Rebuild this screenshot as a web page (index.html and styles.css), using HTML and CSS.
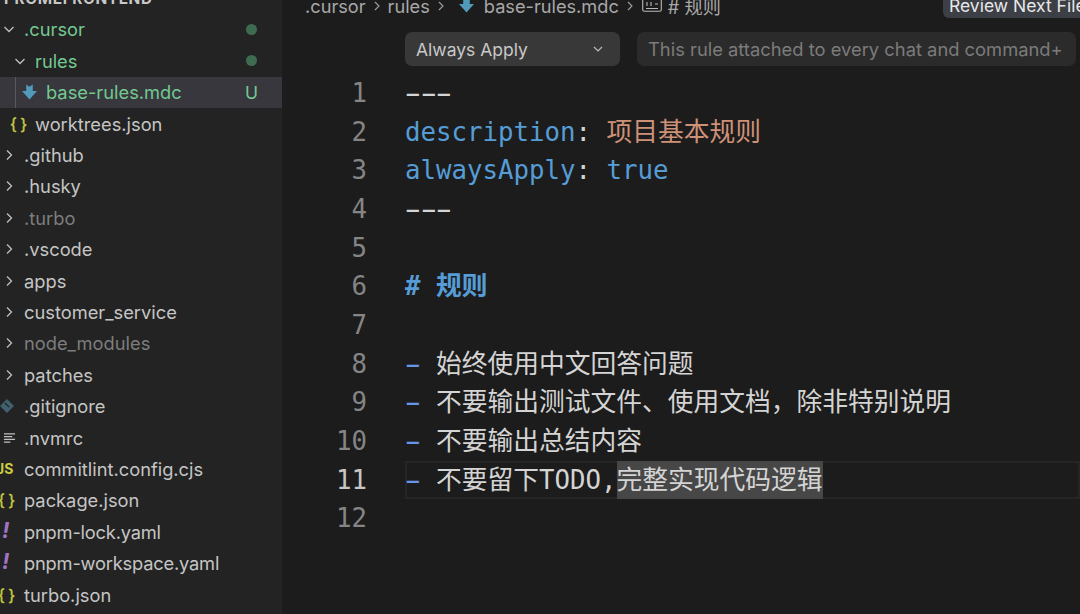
FILE: index.html
```html
<!DOCTYPE html>
<html lang="zh">
<head>
<meta charset="utf-8">
<title>base-rules.mdc</title>
<link rel="stylesheet" href="styles.css">
</head>
<body>
<div class="app">
  <aside class="sidebar">
    <div class="head"><span>PROMEFRONTEND</span></div>
    <div class="row mod d1"><svg class="chev" viewBox="0 0 12 12"><path d="M1.500 4 6 8.500 10.500 4"/></svg><span class="name">.cursor</span><i class="dot"></i></div>
    <div class="row mod d2"><svg class="chev" viewBox="0 0 12 12"><path d="M1.500 4 6 8.500 10.500 4"/></svg><span class="name">rules</span><i class="dot"></i></div>
    <div class="row mod d3 sel"><b class="guide"></b><svg class="ficon" viewBox="0 0 16 16"><path class="blue" d="M4.500 0 8 2.500 11.500 0v7H16L8 16 0 7h4.500z"/></svg><span class="name">base-rules.mdc</span><span class="badge">U</span></div>
    <div class="row d2f"><span class="ic yellow">{ }</span><span class="name">worktrees.json</span></div>
    <div class="row"><svg class="chev" viewBox="0 0 12 12"><path d="M4 1.500 8.500 6 4 10.500"/></svg><span class="name">.github</span></div>
    <div class="row"><svg class="chev" viewBox="0 0 12 12"><path d="M4 1.500 8.500 6 4 10.500"/></svg><span class="name">.husky</span></div>
    <div class="row dim"><svg class="chev" viewBox="0 0 12 12"><path d="M4 1.500 8.500 6 4 10.500"/></svg><span class="name">.turbo</span></div>
    <div class="row"><svg class="chev" viewBox="0 0 12 12"><path d="M4 1.500 8.500 6 4 10.500"/></svg><span class="name">.vscode</span></div>
    <div class="row"><svg class="chev" viewBox="0 0 12 12"><path d="M4 1.500 8.500 6 4 10.500"/></svg><span class="name">apps</span></div>
    <div class="row"><svg class="chev" viewBox="0 0 12 12"><path d="M4 1.500 8.500 6 4 10.500"/></svg><span class="name">customer_service</span></div>
    <div class="row dim"><svg class="chev" viewBox="0 0 12 12"><path d="M4 1.500 8.500 6 4 10.500"/></svg><span class="name">node_modules</span></div>
    <div class="row"><svg class="chev" viewBox="0 0 12 12"><path d="M4 1.500 8.500 6 4 10.500"/></svg><span class="name">patches</span></div>
    <div class="row"><svg class="fi" viewBox="0 0 14 14"><path d="M7 0 14 7 7 14 0 7z" fill="#41606f"/><path d="M5 4 9 8" stroke="#222" stroke-width="1.200"/></svg><span class="name">.gitignore</span></div>
    <div class="row"><svg class="fi nv" viewBox="0 0 14 14"><path d="M1 2.500h12M1 5.500h9M1 8.500h12M1 11.500h7" stroke="#c0c0c0" stroke-width="1.300"/></svg><span class="name">.nvmrc</span></div>
    <div class="row"><span class="ic2 yellow js"><span>JS</span></span><span class="name">commitlint.config.cjs</span></div>
    <div class="row"><span class="ic2 yellow">{ }</span><span class="name">package.json</span></div>
    <div class="row"><span class="ic2 purple">!</span><span class="name narrow">pnpm-lock.yaml</span></div>
    <div class="row"><span class="ic2 purple">!</span><span class="name narrow">pnpm-workspace.yaml</span></div>
    <div class="row"><span class="ic2 yellow">{ }</span><span class="name">turbo.json</span></div>
  </aside>
  <main class="editor">
    <div class="crumbs">
      <span class="c">.cursor</span><svg class="sep" viewBox="0 0 10 10"><path d="M3 1 7 5 3 9"/></svg>
      <span class="c">rules</span><svg class="sep" viewBox="0 0 10 10"><path d="M3 1 7 5 3 9"/></svg>
      <svg class="cicon" viewBox="0 0 16 16"><path class="blue" d="M4.500 0 8 2.500 11.500 0v7H16L8 16 0 7h4.500z"/></svg>
      <span class="c">base-rules.mdc</span><svg class="sep" viewBox="0 0 10 10"><path d="M3 1 7 5 3 9"/></svg>
      <svg class="sym" viewBox="0 0 20 16"><rect x=".7" y="1.700" width="18.600" height="12.600" rx="1.500"/><path d="M4 11.500h12M5 5v4M9 5v4M13 7h3"/></svg>
      <span class="c"># 规则</span>
      <div class="review"><span>Review Next File</span></div>
    </div>
    <div class="toolbar">
      <div class="select"><span>Always Apply</span><svg viewBox="0 0 12 12"><path d="M2 4 6 8 10 4"/></svg></div>
      <div class="desc">This rule attached to every chat and command+</div>
    </div>
    <div class="code">
      <div class="ln"><span class="no">1</span><span class="t"><span class="w">-</span><span class="w">-</span><span class="w">-</span></span></div>
      <div class="ln"><span class="no">2</span><span class="t"><span class="k">description</span>: <span class="s">项目基本规则</span></span></div>
      <div class="ln"><span class="no">3</span><span class="t"><span class="k">alwaysApply</span>: <span class="b">true</span></span></div>
      <div class="ln"><span class="no">4</span><span class="t"><span class="w">-</span><span class="w">-</span><span class="w">-</span></span></div>
      <div class="ln"><span class="no">5</span><span class="t"></span></div>
      <div class="ln"><span class="no">6</span><span class="t h"># 规则</span></div>
      <div class="ln"><span class="no">7</span><span class="t"></span></div>
      <div class="ln"><span class="no">8</span><span class="t"><span class="w m">-</span> 始终使用中文回答问题</span></div>
      <div class="ln"><span class="no">9</span><span class="t"><span class="w m">-</span> 不要输出测试文件、使用文档，除非特别说明</span></div>
      <div class="ln"><span class="no">10</span><span class="t"><span class="w m">-</span> 不要输出总结内容</span></div>
      <div class="ln cur"><span class="no">11</span><span class="t"><span class="w m">-</span> 不要留下TODO,<span class="hl">完整实现代码逻辑</span></span></div>
      <div class="ln"><span class="no">12</span><span class="t"></span></div>
    </div>
  </main>
</div>
</body>
</html>
```
FILE: styles.css
```css
* { box-sizing: border-box; }
html, body { margin: 0; height: 100%; overflow: hidden; background: #1c1c1c; }
.app { display: flex; width: 1080px; height: 614px; overflow: hidden; font-family: Inter, "Noto Sans CJK SC", sans-serif; }
.sidebar { width: 282px; flex: none; background: #232323; color: #c5c5c5; font-size: 18.300px; }
.head { height: 13.800px; overflow: hidden; font-size: 15.400px; font-weight: 700; letter-spacing: .6px; padding-left: 4px; color: #c8c8c8; line-height: 14px; }
.head span { position: relative; top: -8px; }
.row { height: 31.400px; display: flex; align-items: center; padding-left: 3px; white-space: nowrap; }
.name { margin-left: 9px; }
.narrow { letter-spacing: -.2px; }
.chev { width: 12px; height: 12px; flex: none; }
.chev path { fill: none; stroke: #c0c0c0; stroke-width: 1.300; }
.d2 { padding-left: 14px; }
.mod { color: #73c991; }
.dim { color: #7d7d7d; }
.dot { width: 11px; height: 11px; border-radius: 50%; background: #3f6b50; margin-left: auto; margin-right: 25px; }
.sel { background: #37373d; padding-left: 15px; position: relative; }
.guide { position: absolute; left: 15px; top: 0; bottom: 0; width: 1px; background: #5a5a5a; }
.ficon { width: 15px; height: 16px; margin-left: 7px; flex: none; }
.blue { fill: #519aba; }
.badge { margin-left: auto; margin-right: 24px; font-size: 17.500px; }
.d2f { padding-left: 10px; }
.ic { width: 17px; font-size: 16px; word-spacing: -1px; flex: none; -webkit-text-stroke: .4px #cbcb41; }
.d2f .name { margin-left: 8px; }
.yellow { color: #cbcb41; }
.ic2 { width: 24px; margin-left: -3px; flex: none; font-size: 16px; word-spacing: -1px; text-indent: -2px; -webkit-text-stroke: .4px #cbcb41; overflow: hidden; white-space: nowrap; }
.ic2 + .name { margin-left: 0; }
.ic2.purple { color: #a074c4; font-style: italic; font-weight: 700; font-size: 22px; padding-left: 2px; text-indent: 0; -webkit-text-stroke: 0; position: relative; top: -2px; }
.ic2.js { font-size: 14px; font-weight: 700; -webkit-text-stroke: 0; text-indent: -4px; }
.fi { width: 14px; height: 14px; flex: none; margin-left: -3px; margin-right: 10px; }
.fi.nv { width: 13px; height: 14px; margin-left: 0; margin-right: 8px; }
.fi + .name { margin-left: 0; }
.editor { flex: 1; min-width: 0; display: flex; flex-direction: column; }
.crumbs { display: flex; align-items: center; padding-left: 23px; color: #a8a8a8; font-size: 18.200px; white-space: nowrap; position: relative; margin-top: -6px; height: 24px; overflow: hidden; }
.sep { width: 10px; height: 10px; margin: 0 6px 0 6px; flex: none; }
.sep path { fill: none; stroke: #a0a0a0; stroke-width: 1.100; }
.cicon { width: 15px; height: 16px; margin: 0 10px 0 7px; flex: none; transform: translateY(-1px); }
.sym { width: 20px; height: 16px; margin: 0 6px 0 1px; flex: none; transform: translateY(-1px); }
.sym rect, .sym path { fill: none; stroke: #b8b8b8; stroke-width: 1.100; }
.review { position: absolute; left: 661px; bottom: 0; width: 140px; height: 24px; border-radius: 6px 0 0 6px; background: #3c3f46; color: #e8e8e8; font-size: 17.500px; padding: 0 0 0 6px; overflow: hidden; white-space: nowrap; line-height: 24px; }
.toolbar { display: flex; gap: 17px; margin-top: 14px; padding-left: 123px; height: 34px; flex: none; }
.select { width: 215px; background: #383838; border-radius: 7px; display: flex; align-items: center; justify-content: space-between; padding: 0 16px 0 11px; color: #c8c8c8; font-size: 17.500px; }
.select svg { width: 12px; height: 12px; }
.select path { fill: none; stroke: #bbb; stroke-width: 1.200; }
.desc { width: 439px; background: #2b2b2b; border-radius: 7px; display: flex; align-items: center; padding-left: 11px; color: #7b7b7b; font-size: 18.350px; white-space: nowrap; }
.code { margin-top: 8px; font-family: "DejaVu Sans Mono", "Noto Sans CJK SC", monospace; font-size: 25.750px; color: #d4d4d4; }
.ln { height: 38.660px; line-height: 38.660px; display: flex; white-space: pre; }
.no { width: 85px; flex: none; text-align: right; color: #858585; }
.t { margin-left: 38px; flex: 1; }
.k { color: #569cd6; }
.s { color: #ce9178; }
.b { color: #569cd6; }
.h { color: #569cd6; font-weight: 700; }
.w { display: inline-block; transform: scaleX(1.850); }
.m { color: #6796e6; }
.cur .no { color: #c6c6c6; }
.cur .t { box-shadow: inset 0 0 0 2px #252525; }
.hl { background: #474747; display: inline-block; height: 38.660px; vertical-align: top; }
```
